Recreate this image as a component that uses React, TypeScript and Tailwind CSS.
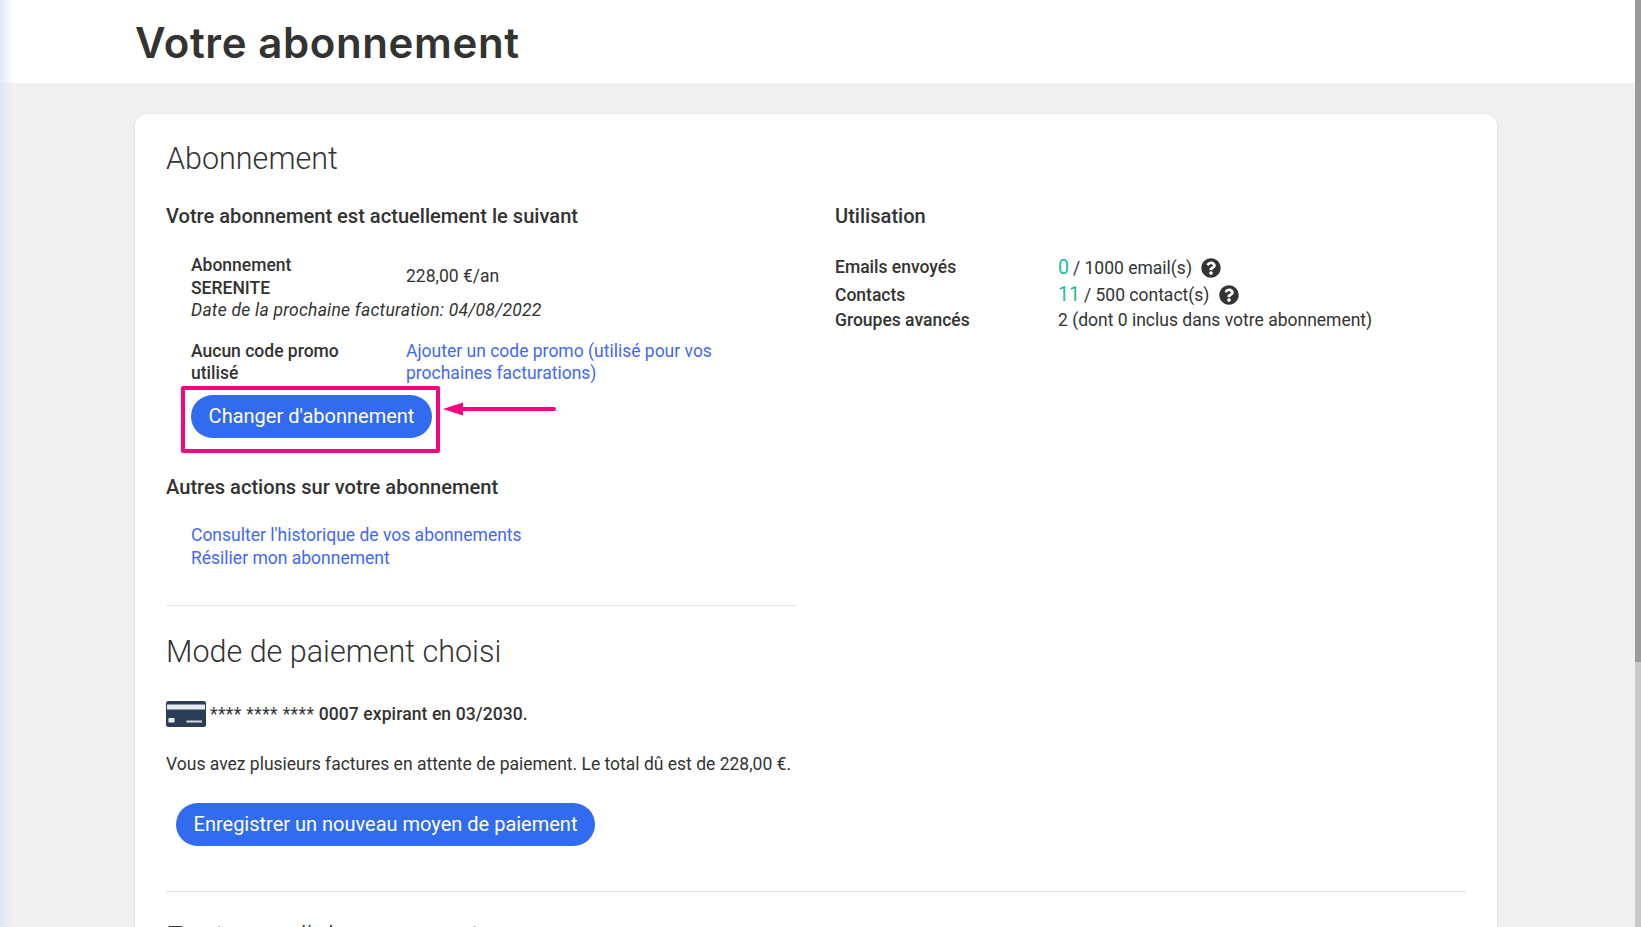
import React from 'react';
import { FaQuestionCircle } from 'react-icons/fa';

function CardIcon() {
  return (
    <svg width="40" height="26" viewBox="0 0 40 26" className="shrink-0">
      <rect width="40" height="26" rx="2.5" fill="#2c3e57" />
      <rect x="1" y="3.5" width="38" height="5" fill="#e6e9ee" />
      <rect x="2.5" y="17" width="6" height="4.5" fill="#e6e9ee" />
      <rect x="20.5" y="19.5" width="15.5" height="2" fill="#d3d8df" />
    </svg>
  );
}

function App() {
  return (
    <div className="relative h-screen overflow-hidden bg-[#f1f1f1] font-['Roboto',sans-serif] text-[17.5px] text-[#333]">
      <header className="flex h-[83px] items-center bg-white pl-[135px]">
        <h1 className="mt-[2px] font-['Inter',sans-serif] text-[42px] font-semibold tracking-[0.6px] text-[#333]">Votre abonnement</h1>
      </header>

      <main className="pl-[135px] pt-[31px]">
        <div className="w-[1362px] rounded-t-[12px] bg-white px-[31px] pt-[25px] shadow-[0_0_4px_rgba(0,0,0,0.08)]">
          <h2 className="text-[30.5px] font-light leading-[40px]">Abonnement</h2>

          <div className="mt-[25px] grid grid-cols-[631px_1fr] gap-[38px]">
            <div>
              <h3 className="text-[20.1px] font-medium leading-[24px]">Votre abonnement est actuellement le suivant</h3>

              <div className="ml-[25px] mt-[26px]">
                <div className="flex items-center">
                  <div className="w-[215px] font-medium leading-[23px]">
                    Abonnement
                    <br />
                    SERENITE
                  </div>
                  <div className="-mt-[1px]">228,00 €/an</div>
                </div>
                <div className="-mt-[1px] italic leading-[22px] tracking-[0.24px]">Date de la prochaine facturation: 04/08/2022</div>

                <div className="mt-[19px] flex leading-[22px]">
                  <div className="w-[215px] pr-10 font-medium">Aucun code promo utilisé</div>
                  <a className="w-[330px] text-[#4169f5]">Ajouter un code promo (utilisé pour vos prochaines facturations)</a>
                </div>

                <div className="relative mt-[11px] w-fit">
                  <button className="h-[43px] w-[241px] rounded-full bg-[#316bf0] pb-[1px] text-[20px] text-white">Changer d'abonnement</button>
                  <div className="absolute -left-[10px] -top-[9px] h-[67px] w-[259px] rounded-[2px] border-[4px] border-[#f8047e]" />
                  <svg width="114" height="14" viewBox="0 0 114 14" className="absolute left-[252px] top-[7px]">
                    <path d="M0 7 L20 0.5 L20 13.5 Z" fill="#f8047e" />
                    <rect x="18" y="5" width="95" height="4" rx="2" fill="#f8047e" />
                  </svg>
                </div>
              </div>

              <h3 className="mt-[37px] text-[20.1px] font-medium leading-[24px]">Autres actions sur votre abonnement</h3>
              <div className="ml-[25px] mt-[25px] flex flex-col leading-[23px] text-[#4169f5]">
                <a>Consulter l'historique de vos abonnements</a>
                <a>Résilier mon abonnement</a>
              </div>

              <hr className="mt-[35px] border-[#e5e5e5]" />

              <h2 className="mt-[26px] text-[30.5px] font-light leading-[40px]">Mode de paiement choisi</h2>

              <div className="mt-[29px] flex items-center">
                <CardIcon />
                <span className="ml-[4px]">
                  <span className="tracking-[0.37px]">**** **** ****</span>{' '}
                  <span className="font-medium tracking-[0.1px]">0007 expirant en 03/2030.</span>
                </span>
              </div>

              <p className="mt-[25px] leading-[24px]">Vous avez plusieurs factures en attente de paiement. Le total dû est de 228,00 €.</p>

              <button className="ml-[10px] mt-[27px] h-[43px] w-[419px] rounded-full bg-[#316bf0] pb-[1px] text-[20px] text-white">Enregistrer un nouveau moyen de paiement</button>
            </div>

            <div>
              <h3 className="text-[20.1px] font-medium leading-[24px]">Utilisation</h3>
              <div className="mt-[26px] grid grid-cols-[223px_1fr] leading-[24px]">
                <div className="font-medium leading-[26px]">Emails envoyés</div>
                <div className="flex h-[28px] items-center">
                  <span className="text-[19.5px] text-[#1abc9c]">0</span>
                  <span className="ml-[4px]">/ 1000 email(s)</span>
                  <FaQuestionCircle className="ml-[9px] text-[20px] text-[#333]" />
                </div>
                <div className="font-medium leading-[26px]">Contacts</div>
                <div className="flex h-[26px] items-center">
                  <span className="text-[19.5px] text-[#1abc9c]">11</span>
                  <span className="ml-[4px]">/ 500 contact(s)</span>
                  <FaQuestionCircle className="ml-[10px] text-[20px] text-[#333]" />
                </div>
                <div className="font-medium">Groupes avancés</div>
                <div>2 (dont 0 inclus dans votre abonnement)</div>
              </div>
            </div>
          </div>

          <hr className="mt-[45px] border-[#e5e5e5]" />
          <h2 className="mt-[26px] text-[30.5px] font-light leading-[40px]">Factures d'abonnement</h2>
          <div className="h-[200px]" />
        </div>
      </main>

      <div className="pointer-events-none absolute inset-y-0 left-0 w-[14px] bg-gradient-to-r from-[#d5e0f5]/70 to-transparent" />
      <div className="absolute inset-y-0 right-0 w-[6px] bg-[#c8c8c8]">
        <div className="h-[662px] w-full bg-[#9a9a9a]" />
      </div>
    </div>
  );
}

export default App;
